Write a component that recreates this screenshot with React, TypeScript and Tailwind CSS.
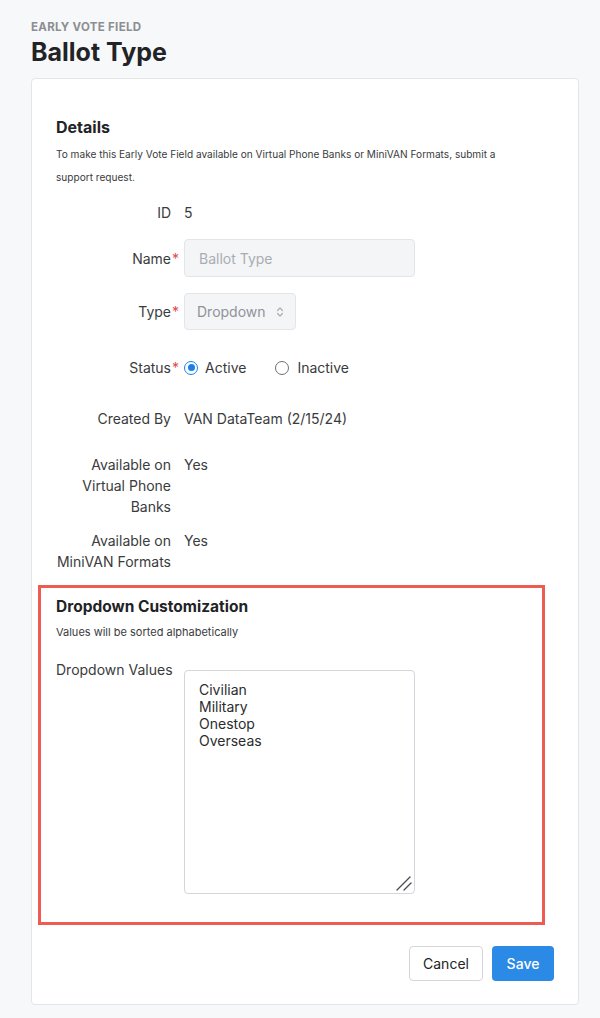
import React from "react";

const font = { fontFamily: "Inter, 'Noto Sans', Arial, sans-serif" };

function Label({ text, required }: { text: React.ReactNode; required?: boolean }) {
  return (
    <div className="w-[116px] shrink-0 text-right text-[14px] leading-[21px] text-[#3a3b3d] pr-[1px]">
      <span className="relative">
        {text}
        {required && <span className="absolute left-full top-[-2px] ml-[1px] text-[#e5484d]">*</span>}
      </span>
    </div>
  );
}

export default function App() {
  return (
    <div className="min-h-[1018px] w-[600px] bg-[#f7f8fa] px-[31px] pt-[20px] pb-[12px]" style={font}>
      <div className="text-[11.5px] leading-[14px] font-bold tracking-[0.3px] text-[#8b8e92]">EARLY VOTE FIELD</div>
      <h1 className="mt-[3px] text-[25px] leading-[30px] font-bold text-[#222326]">Ballot Type</h1>
      <div className="mt-[11px] w-[548px] h-[927px] rounded-[4px] border border-[#e3e5e8] bg-white px-[24px] pt-[36px]">
        <h2 className="text-[16px] leading-[24px] font-bold text-[#222326]">Details</h2>
        <p className="mt-[4px] text-[10.1px] leading-[23px] text-[#3a3b3d]">
          To make this Early Vote Field available on Virtual Phone Banks or MiniVAN Formats, submit a
          <br />
          support request.
        </p>
        <div className="mt-[13px] flex items-center gap-[12px]">
          <Label text="ID" />
          <div className="text-[14px] leading-[21px] text-[#3a3b3d]">5</div>
        </div>
        <div className="mt-[16px] flex items-center gap-[12px]">
          <Label text="Name" required />
          <div className="flex h-[38px] w-[231px] items-center rounded-[4px] border border-[#e3e5e8] bg-[#f4f5f7] px-[14px] text-[14px] text-[#a9adb2]">
            Ballot Type
          </div>
        </div>
        <div className="mt-[16px] flex items-center gap-[12px]">
          <Label text="Type" required />
          <div className="flex h-[37px] w-[112px] items-center justify-between rounded-[4px] border border-[#e3e5e8] bg-[#f4f5f7] pl-[12px] pr-[11px] text-[14px] text-[#8f9398]">
            <span>Dropdown</span>
            <svg width="8" height="12" viewBox="0 0 8 12" fill="none" stroke="#a9adb2" strokeWidth="1.2" strokeLinecap="round" strokeLinejoin="round">
              <path d="M1.5 4.5 L4 2 L6.5 4.5" />
              <path d="M1.5 7.5 L4 10 L6.5 7.5" />
            </svg>
          </div>
        </div>
        <div className="mt-[27px] flex items-center gap-[12px]">
          <Label text="Status" required />
          <div className="flex items-center text-[14px] leading-[21px] text-[#3a3b3d]">
            <span className="flex h-[14px] w-[14px] items-center justify-center rounded-full border-[1.5px] border-[#1a7fe8]">
              <span className="h-[7px] w-[7px] rounded-full bg-[#1a7fe8]" />
            </span>
            <span className="ml-[7px]">Active</span>
            <span className="ml-[29px] h-[14px] w-[14px] rounded-full border border-[#6d7075]" />
            <span className="ml-[8px]">Inactive</span>
          </div>
        </div>
        <div className="mt-[30px] flex items-center gap-[12px]">
          <Label text="Created By" />
          <div className="text-[14px] leading-[21px] text-[#3a3b3d]">VAN DataTeam (2/15/24)</div>
        </div>
        <div className="mt-[25px] flex items-start gap-[12px]">
          <Label text={<>Available on<br />Virtual Phone<br />Banks</>} />
          <div className="text-[14px] leading-[21px] text-[#3a3b3d]">Yes</div>
        </div>
        <div className="mt-[13px] flex items-start gap-[12px]">
          <Label text={<>Available on<br />MiniVAN Formats</>} />
          <div className="text-[14px] leading-[21px] text-[#3a3b3d]">Yes</div>
        </div>
        <div className="mt-[13px] ml-[-18px] mr-[9px] h-[340px] border-[3px] border-[#ee5b50] pl-[15px] pt-[8px]">
          <h3 className="text-[15.5px] leading-[22px] font-bold text-[#222326]">Dropdown Customization</h3>
          <p className="mt-[6px] text-[11px] leading-[16px] text-[#3a3b3d]">Values will be sorted alphabetically</p>
          <div className="mt-[19px] flex items-start">
            <div className="w-[128px] shrink-0 text-[14px] leading-[21px] text-[#3a3b3d]">Dropdown Values</div>
            <div className="relative mt-[11px] h-[224px] w-[231px] rounded-[4px] border border-[#d3d6da] bg-white px-[14px] pt-[10px] text-[14px] leading-[17px] text-[#2b2c2e]">
              <div>Civilian</div>
              <div>Military</div>
              <div>Onestop</div>
              <div>Overseas</div>
              <svg className="absolute right-[1px] bottom-[1px]" width="18" height="18" viewBox="0 0 18 18" stroke="#4a4b4d" strokeWidth="1.3" strokeLinecap="round">
                <path d="M2 16 L15 3" />
                <path d="M9 16 L16 9" />
              </svg>
            </div>
          </div>
        </div>
        <div className="mt-[21px] flex justify-end gap-[9px]">
          <button className="h-[35px] w-[74px] rounded-[4px] border border-[#d3d6da] bg-white text-[14px] text-[#222326]">Cancel</button>
          <button className="h-[35px] w-[62px] rounded-[4px] bg-[#2b8ae6] text-[14px] font-medium text-white">Save</button>
        </div>
      </div>
    </div>
  );
}
